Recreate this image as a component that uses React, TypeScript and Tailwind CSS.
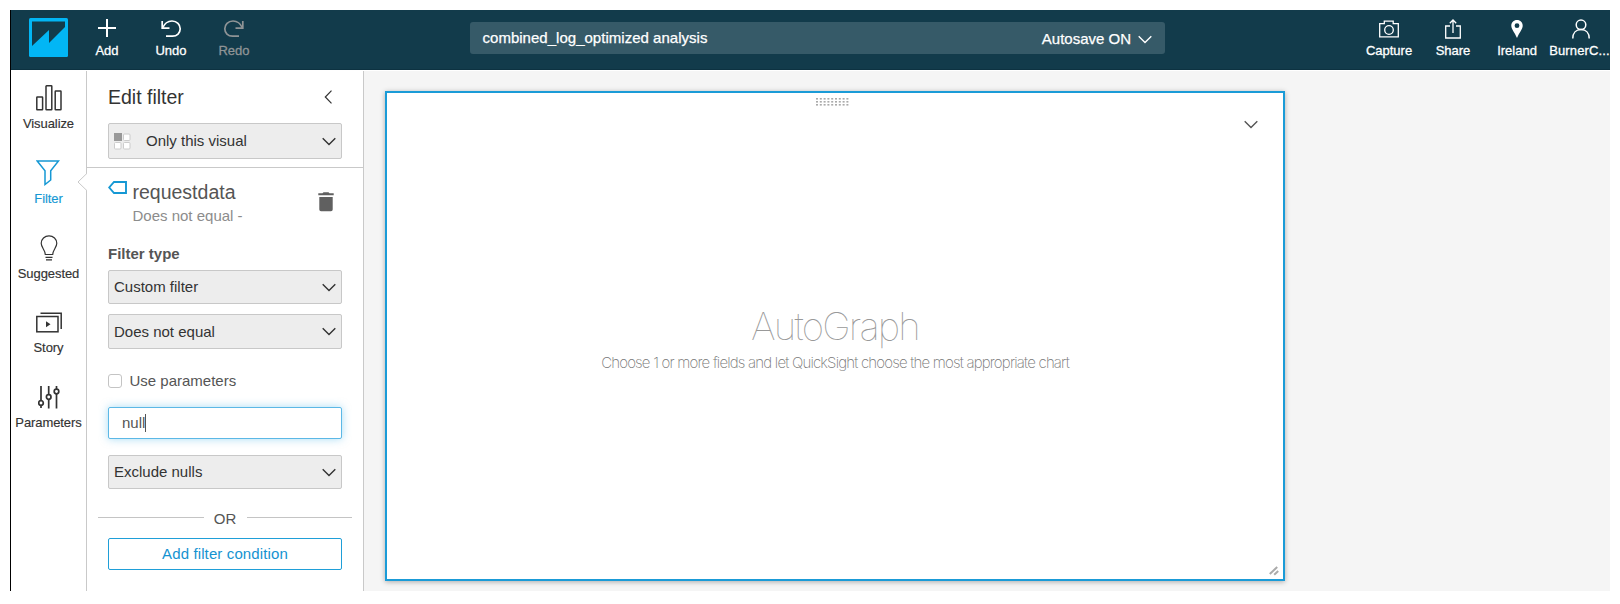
import React from "react";

type IconProps = { children: React.ReactNode; w: number; h: number; className?: string; sw?: number };

function Icon({ children, w, h, className = "", sw = 1.3 }: IconProps) {
  return (
    <svg width={w} height={h} viewBox={`0 0 ${w} ${h}`} fill="none" stroke="currentColor" strokeWidth={sw} className={`shrink-0 ${className}`}>
      {children}
    </svg>
  );
}

function Chevron({ className = "", sw = 1.4 }: { className?: string; sw?: number }) {
  return (
    <Icon w={14} h={9} sw={sw} className={className}>
      <path d="M.7 1.2 7 7.5 13.3 1.2" />
    </Icon>
  );
}

function HeaderItem({ label, children, className = "", labelClass = "" }: { label: string; children: React.ReactNode; className?: string; labelClass?: string }) {
  return (
    <button className={`flex w-16 flex-col items-center ${className}`}>
      <span className="flex h-[30px] items-center">{children}</span>
      <span className={`text-[13px] leading-4 whitespace-nowrap [-webkit-text-stroke:0.3px] ${labelClass}`}>{label}</span>
    </button>
  );
}

function RailItem({ label, active, children }: { label: string; active?: boolean; children: React.ReactNode }) {
  return (
    <button className={`flex h-[74.75px] w-full flex-col items-center ${active ? "text-[#1598d4]" : "text-[#333]"}`}>
      <span className="flex h-[28px] items-center">{children}</span>
      <span className="mt-[4px] text-[13px] leading-4 tracking-[-0.08px] [-webkit-text-stroke:0.15px]">{label}</span>
    </button>
  );
}

function Select({ label, className = "h-[34px]", icon }: { label: string; className?: string; icon?: React.ReactNode }) {
  return (
    <div className={`flex items-center rounded-[2px] border border-[#c8c8c8] bg-[#ededed] pr-[5px] pl-[5px] text-[#333] ${className}`}>
      {icon}
      <span className="flex-1 leading-5">{label}</span>
      <Chevron />
    </div>
  );
}

function Header() {
  return (
    <header className="flex h-[60px] shrink-0 border-b border-[#0d3241] bg-[#123b4b] text-white">
      <svg width="39" height="39" viewBox="0 0 39 39" className="mt-2 ml-[18px] shrink-0">
        <rect width="39" height="39" rx="1.5" fill="#02b6f5" />
        <path d="M3 3.500H36V9L20 25V12L3 28Z" fill="#123b4b" />
      </svg>
      <nav className="ml-[7px] flex pt-[3px]">
        <HeaderItem label="Add">
          <Icon w={18} h={18} sw={2}><path d="M9 0V18M0 9H18" /></Icon>
        </HeaderItem>
        <HeaderItem label="Undo">
          <Icon w={22} h={20} sw={1.700} className="mt-px">
            <path d="M2.200 2V9.200H9.500" />
            <path d="M2.500 9C4.500 4.500 7.500 2 12 2C17 2 20.200 5.500 20.200 9.700C20.200 14 17 17.200 12.500 17.200H6" />
          </Icon>
        </HeaderItem>
        <HeaderItem label="Redo" className="-ml-px text-[#8f9496]">
          <Icon w={22} h={20} sw={1.700} className="mt-px">
            <path d="M19.800 2V9.200H12.500" />
            <path d="M19.500 9C17.500 4.500 14.500 2 10 2C5 2 1.800 5.500 1.800 9.700C1.800 14 5 17.200 9.500 17.200H16" />
          </Icon>
        </HeaderItem>
      </nav>
      <div className="mt-3 ml-[204px] flex h-8 w-[695px] shrink-0 items-center justify-between rounded-[3px] bg-[#365a68] pt-px pr-[13px] pl-[12.500px] text-[15px] [-webkit-text-stroke:0.25px]">
        <span className="tracking-[0.020px]">combined_log_optimized analysis</span>
        <span className="flex items-center gap-[7px] pt-px">
          Autosave ON
          <Chevron sw={1.400} />
        </span>
      </div>
      <nav className="-mr-[3px] ml-auto flex pt-[3px]">
        <HeaderItem label="Capture">
          <Icon w={20} h={18} className="mt-[2px]">
            <path d="M.7 3.700H5.300V1.200H14.200V3.700H19.300V16.800H.7Z" />
            <circle cx="10" cy="10" r="4.300" />
          </Icon>
        </HeaderItem>
        <HeaderItem label="Share">
          <Icon w={16} h={20} className="mt-px">
            <path d="M5 7H.7V19H15.300V7H11M8 14V1M4.800 4.200 8 1 11.200 4.200" />
          </Icon>
        </HeaderItem>
        <HeaderItem label="Ireland">
          <svg width="12" height="18" viewBox="0 0 12 18" className="mt-px">
            <path fillRule="evenodd" fill="currentColor" d="M6 0C2.500 0 .3 2.500.3 5.700.3 9 3.500 12 6 18 8.500 12 11.700 9 11.700 5.700 11.700 2.500 9.500 0 6 0ZM6 3.300A2.400 2.400 0 1 1 6 8.100 2.400 2.400 0 1 1 6 3.300Z" />
          </svg>
        </HeaderItem>
        <HeaderItem label="BurnerC..." labelClass="-ml-[3px] tracking-[0.150px]">
          <Icon w={18} h={20} sw={1.500} className="mt-px">
            <circle cx="9" cy="5.800" r="4.800" />
            <path d="M.8 19.500C.8 14 4 10.600 9 10.600S17.200 14 17.200 19.500" />
          </Icon>
        </HeaderItem>
      </nav>
    </header>
  );
}

function Rail() {
  return (
    <aside className="flex w-[75px] shrink-0 flex-col bg-white pt-[13px]">
      <RailItem label="Visualize">
        <Icon w={26} h={26} sw={1.500}>
          <rect x=".8" y="12" width="5.800" height="12.800" rx=".5" />
          <rect x="10" y=".8" width="5.800" height="24" rx=".5" />
          <rect x="19.200" y="6" width="5.800" height="18.800" rx=".5" />
        </Icon>
      </RailItem>
      <RailItem label="Filter" active>
        <Icon w={24} h={26} sw={1.500} className="-ml-px">
          <path d="M1.200 1H22.500L14.700 10.800V20L9 24.500V10.800Z" />
        </Icon>
      </RailItem>
      <RailItem label="Suggested">
        <Icon w={18} h={26} sw={1.200}>
          <path d="M5.300 19.500C5.300 15 1.200 12.500 1.200 8.300A7.800 7.500 0 0 1 16.800 8.300C16.800 12.500 12.700 15 12.700 19.500Z" />
          <path d="M5.500 22.300H12.500M6 24.800H12" />
        </Icon>
      </RailItem>
      <RailItem label="Story">
        <Icon w={26} h={22} sw={1.500} className="mt-px">
          <rect x=".8" y="4.500" width="21.200" height="15.300" />
          <path d="M4.500 1.200H25.200V17" />
          <path d="M10 9.300 14.500 12.300 10 15.300Z" fill="currentColor" stroke="none" />
        </Icon>
      </RailItem>
      <RailItem label="Parameters">
        <Icon w={22} h={24} sw={1.700} className="-mt-px">
          <path d="M3 1V15.500M3 20.500V23M10.700 1V9.500M10.700 14.500V23.500M18.500 1V4M18.500 9V23.500" />
          <circle cx="3" cy="18" r="2.300" />
          <circle cx="10.700" cy="12" r="2.300" />
          <circle cx="18.500" cy="6.500" r="2.300" />
        </Icon>
      </RailItem>
    </aside>
  );
}

function FilterPanel() {
  return (
    <section className="relative flex w-[278px] shrink-0 flex-col border-x border-[#c9c9c9] bg-white text-[15px] text-[#555]">
      <svg width="10" height="18" viewBox="0 0 10 18" className="absolute top-[102px] -left-[10px]">
        <path d="M10 .3 1 9 10 17.700" fill="#fff" stroke="#c9c9c9" />
      </svg>
      <div className="flex h-[97px] flex-col border-b border-[#c9c9c9] px-[21px]">
        <div className="flex h-[52px] items-center justify-between pt-px pr-[9px] text-[19.500px] text-[#333]">
          <h2>Edit filter</h2>
          <Icon w={9} h={14} sw={1.200} className="-mt-[2px]"><path d="M7.500 .6 1.300 7 7.500 13.400" /></Icon>
        </div>
        <Select
          label="Only this visual"
          className="h-9"
          icon={
            <svg width="18" height="18" viewBox="0 0 18 18" className="mt-px mr-[14px]">
              <rect x=".5" y=".5" width="7" height="7" fill="#999" stroke="#999" />
              <g fill="#fff" stroke="#ccc">
                <rect x="9.500" y="1" width="6.500" height="6.500" rx="1" />
                <rect x=".5" y="9.500" width="6.500" height="6.500" rx="1" />
                <rect x="9.500" y="9.500" width="6.500" height="6.500" rx="1" />
              </g>
            </svg>
          }
        />
      </div>

      <div className="flex h-[76px] items-start px-[21px] pt-[13px]">
        <Icon w={19} h={13} sw={1.900} className="text-[#1598d4]">
          <path d="M6 1H18V12H6L1.200 6.500Z" />
        </Icon>
        <div className="ml-[5.500px] flex-1">
          <div className="text-[19.500px] leading-[22px]">requestdata</div>
          <div className="mt-[3px] leading-5 text-[#8c8c8c]">Does not equal -</div>
        </div>
        <svg width="16" height="20" viewBox="0 0 16 20" className="mt-[11px] mr-2" fill="#606060">
          <path d="M.3 1.200H4.500L5.500 .2H10.500L11.500 1.200H15.700V3.200H.3ZM1.300 5H14.700V17.500Q14.700 19.300 13 19.300H3Q1.300 19.300 1.300 17.500Z" />
        </svg>
      </div>

      <div className="flex flex-col px-[21px]">
        <h3 className="mb-[6px] leading-5 font-bold">Filter type</h3>
        <Select label="Custom filter" />
        <Select label="Does not equal" className="mt-[10px] h-[35px]" />
        <label className="mt-[22px] flex h-5 items-center gap-[7.500px]">
          <span className="size-[14px] rounded-[3px] border border-[#c4c4c4] bg-white" />
          Use parameters
        </label>
        <div className="mt-4 flex h-8 items-center rounded-[2px] border border-[#5cb8e6] bg-white pl-[13px] shadow-[0_0_8px_rgba(80,185,235,0.5)]">
          null
          <span className="h-[18px] w-px bg-[#555]" />
        </div>
        <Select label="Exclude nulls" className="mt-4 h-[34px]" />
      </div>

      <div className="mt-[19px] flex h-5 items-center px-[11px]">
        <span className="mb-[2px] h-px flex-1 bg-[#c4c4c4]" />
        <span className="w-[43px] pt-[2px] text-center leading-5">OR</span>
        <span className="mb-[2px] h-px flex-1 bg-[#c4c4c4]" />
      </div>
      <button className="mx-[21px] mt-[10px] h-8 shrink-0 rounded-[2px] border border-[#1f9fd8] tracking-[0.120px] text-[#1493d1]">Add filter condition</button>
    </section>
  );
}

function Canvas() {
  return (
    <main className="flex flex-1 bg-[#f5f5f5] pt-5 pl-[21px]">
      <div className="relative flex h-[490px] w-[900px] flex-col items-center border-2 border-[#1a9bd7] bg-white shadow-[0_1px_5px_rgba(0,0,0,0.3)]">
        <svg width="34" height="9" viewBox="0 0 34 9" className="mt-[5px] mr-[6px]">
          {[0, 1, 2].map((r) =>
            Array.from({ length: 9 }, (_, c) => <rect key={`${r}-${c}`} x={1 + c * 3.8} y={r * 3} width="2" height="1.600" fill="#aaa" />)
          )}
        </svg>
        <Chevron className="mt-[13px] mr-[25px] self-end text-[#555]" />
        <h1 className="mt-[173px] font-['Inter'] text-[38.500px] leading-[48px] font-thin tracking-[-1.850px] text-[#999]">AutoGraph</h1>
        <p className="mt-[3px] font-['Inter'] text-[15px] leading-5 font-extralight tracking-[-0.820px] whitespace-nowrap text-[#777] [word-spacing:0.100px]">
          Choose 1 or more fields and let QuickSight choose the most appropriate chart
        </p>
        <svg width="10" height="10" viewBox="0 0 10 10" className="absolute right-1 bottom-[3px]" stroke="#aaa" strokeWidth="2">
          <path d="M.8 8 8.200 1M5.200 8.800 9.200 5" />
        </svg>
      </div>
    </main>
  );
}

export default function App() {
  return (
    <div className="h-[604px] w-[1620px] overflow-hidden bg-white p-[10px] pb-[13px] font-['Liberation_Sans',Arial,sans-serif]">
      <div className="flex h-[581px] flex-col overflow-hidden border-l border-black">
        <Header />
        <div className="flex min-h-0 flex-1 pt-px">
          <Rail />
          <FilterPanel />
          <Canvas />
        </div>
      </div>
    </div>
  );
}
